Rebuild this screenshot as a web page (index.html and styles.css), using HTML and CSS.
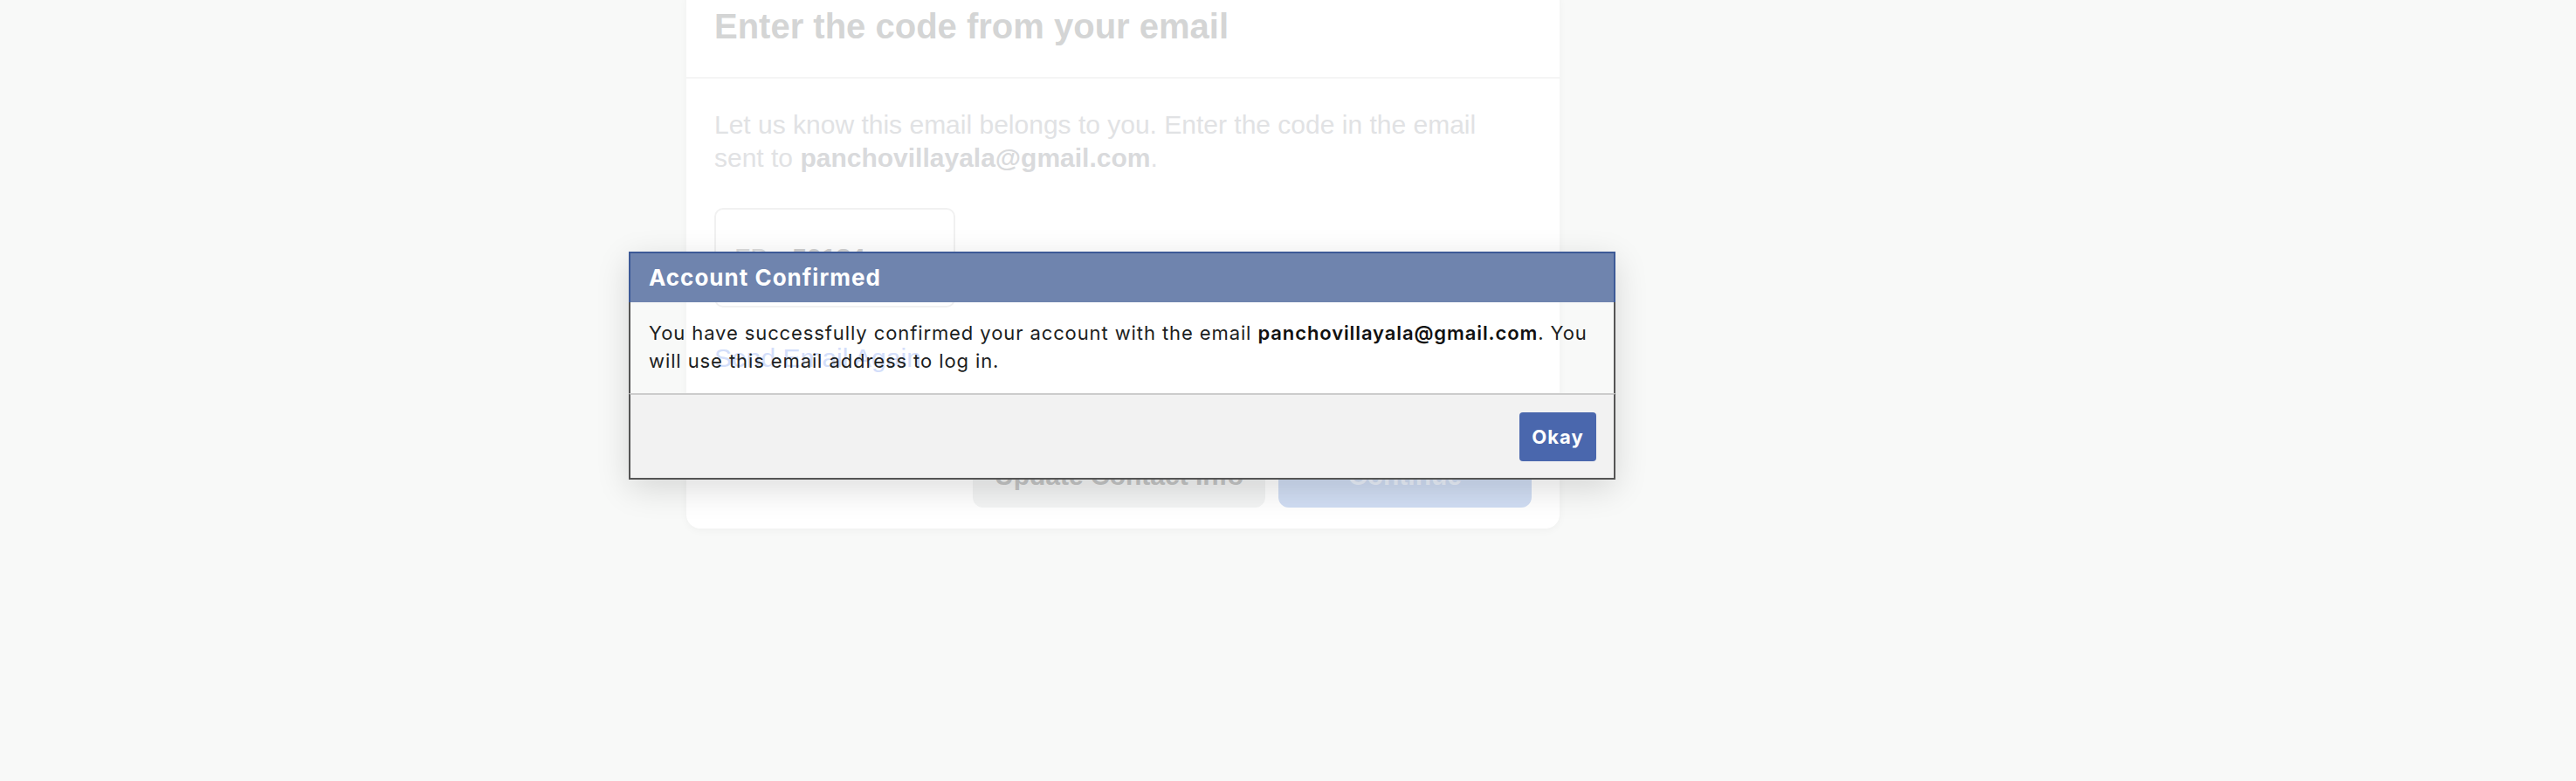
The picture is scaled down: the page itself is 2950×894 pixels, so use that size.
FILE: index.html
```html
<!DOCTYPE html>
<html lang="en">
<head>
<meta charset="utf-8">
<title>Account Confirmed</title>
<link rel="stylesheet" href="styles.css">
</head>
<body>
<div class="page">
  <div class="card">
    <div class="card-head">
      <h1 class="card-title">Enter the code from your email</h1>
    </div>
    <div class="card-body">
      <p class="lead">Let us know this email belongs to you. Enter the code in the email sent to <b>panchovillayala@gmail.com</b>.</p>
      <div class="code-box"><span class="prefix">FB-</span><span class="code">50184</span></div>
      <div class="resend">Send Email Again</div>
      <div class="actions">
        <div class="btn btn-gray">Update Contact Info</div>
        <div class="btn btn-blue">Continue</div>
      </div>
    </div>
  </div>

  <div class="dialog">
    <div class="dialog-title">Account Confirmed</div>
    <div class="dialog-body">You have successfully confirmed your account with the email <b>panchovillayala@gmail.com</b>. You will use this email address to log in.</div>
    <div class="dialog-footer">
      <div class="okay">Okay</div>
    </div>
  </div>
</div>
</body>
</html>
```

FILE: styles.css
```css
html, body {
  margin: 0;
  padding: 0;
}
body {
  background: #f8f9f8;
  width: 2950px;
  height: 894px;
  overflow: hidden;
  font-family: "Liberation Sans", Arial, sans-serif;
}
.page {
  position: relative;
  display: flow-root;
  width: 2950px;
  height: 894px;
}
.card {
  margin: -14px 0 0 786px;
  width: 1000px;
  background: #ffffff;
  border-radius: 16px;
  box-shadow: 0 2px 10px rgba(0, 0, 0, 0.04);
}
.card-head {
  padding: 20px 32px 0 32px;
  height: 82px;
  border-bottom: 2px solid #f5f5f5;
}
.card-title {
  margin: 0;
  font-size: 40px;
  line-height: 48px;
  font-weight: bold;
  color: #d4d5d5;
}
.card-body {
  padding: 34px 32px 24px 32px;
}
.lead {
  margin: 0;
  max-width: 900px;
  font-size: 30px;
  line-height: 38px;
  color: #e1e2e4;
}
.lead b {
  color: #d9dadc;
}
.code-box {
  margin-top: 38px;
  width: 276px;
  height: 114px;
  box-sizing: border-box;
  border: 2px solid #f1f1f1;
  border-radius: 10px;
  display: flex;
  align-items: center;
  padding-left: 21px;
  font-size: 30px;
  color: #dcdcdc;
}
.prefix {
  margin-right: 18px;
}
.code {
  font-weight: bold;
  color: #d0d0d0;
}
.resend {
  margin-top: 39px;
  font-size: 30px;
  line-height: 38px;
  color: #d3defa;
}
.actions {
  margin-top: 80px;
  display: flex;
  justify-content: flex-end;
  gap: 15px;
}
.btn {
  height: 72px;
  border-radius: 12px;
  display: flex;
  align-items: center;
  justify-content: center;
  font-size: 30px;
  font-weight: bold;
}
.btn-gray {
  width: 335px;
  background: #f3f4f4;
  color: #c4c5c5;
}
.btn-blue {
  width: 290px;
  background: #d0ddf3;
  color: #eaf0fa;
}

.dialog {
  position: absolute;
  left: 720px;
  top: 288px;
  width: 1130px;
  font-family: Inter, "Liberation Sans", sans-serif;
  box-shadow: 0 10px 36px rgba(0, 0, 0, 0.14);
}
.dialog-title {
  height: 56px;
  border: 2px solid #3d5a97;
  border-bottom: none;
  background: #6f84ae;
  color: #ffffff;
  font-size: 26px;
  line-height: 56px;
  font-weight: bold;
  letter-spacing: 1px;
  padding-left: 21px;
}
.dialog-body {
  border-left: 2px solid #555555;
  border-right: 2px solid #555555;
  padding: 19px 21px 21px 21px;
  font-size: 22px;
  line-height: 32px;
  letter-spacing: 0.9px;
  color: #1c1e21;
}
.dialog-body b {
  font-weight: 600;
  color: #111111;
}
.dialog-footer {
  background: #f2f2f2;
  border: 2px solid #555555;
  border-top: 2px solid #cccccc;
  padding: 20px 20px 19px 20px;
  display: flex;
  justify-content: flex-end;
}
.okay {
  width: 88px;
  height: 56px;
  border-radius: 4px;
  background: #4a67ad;
  color: #ffffff;
  font-size: 22px;
  font-weight: bold;
  letter-spacing: 1px;
  display: flex;
  align-items: center;
  justify-content: center;
}
```
